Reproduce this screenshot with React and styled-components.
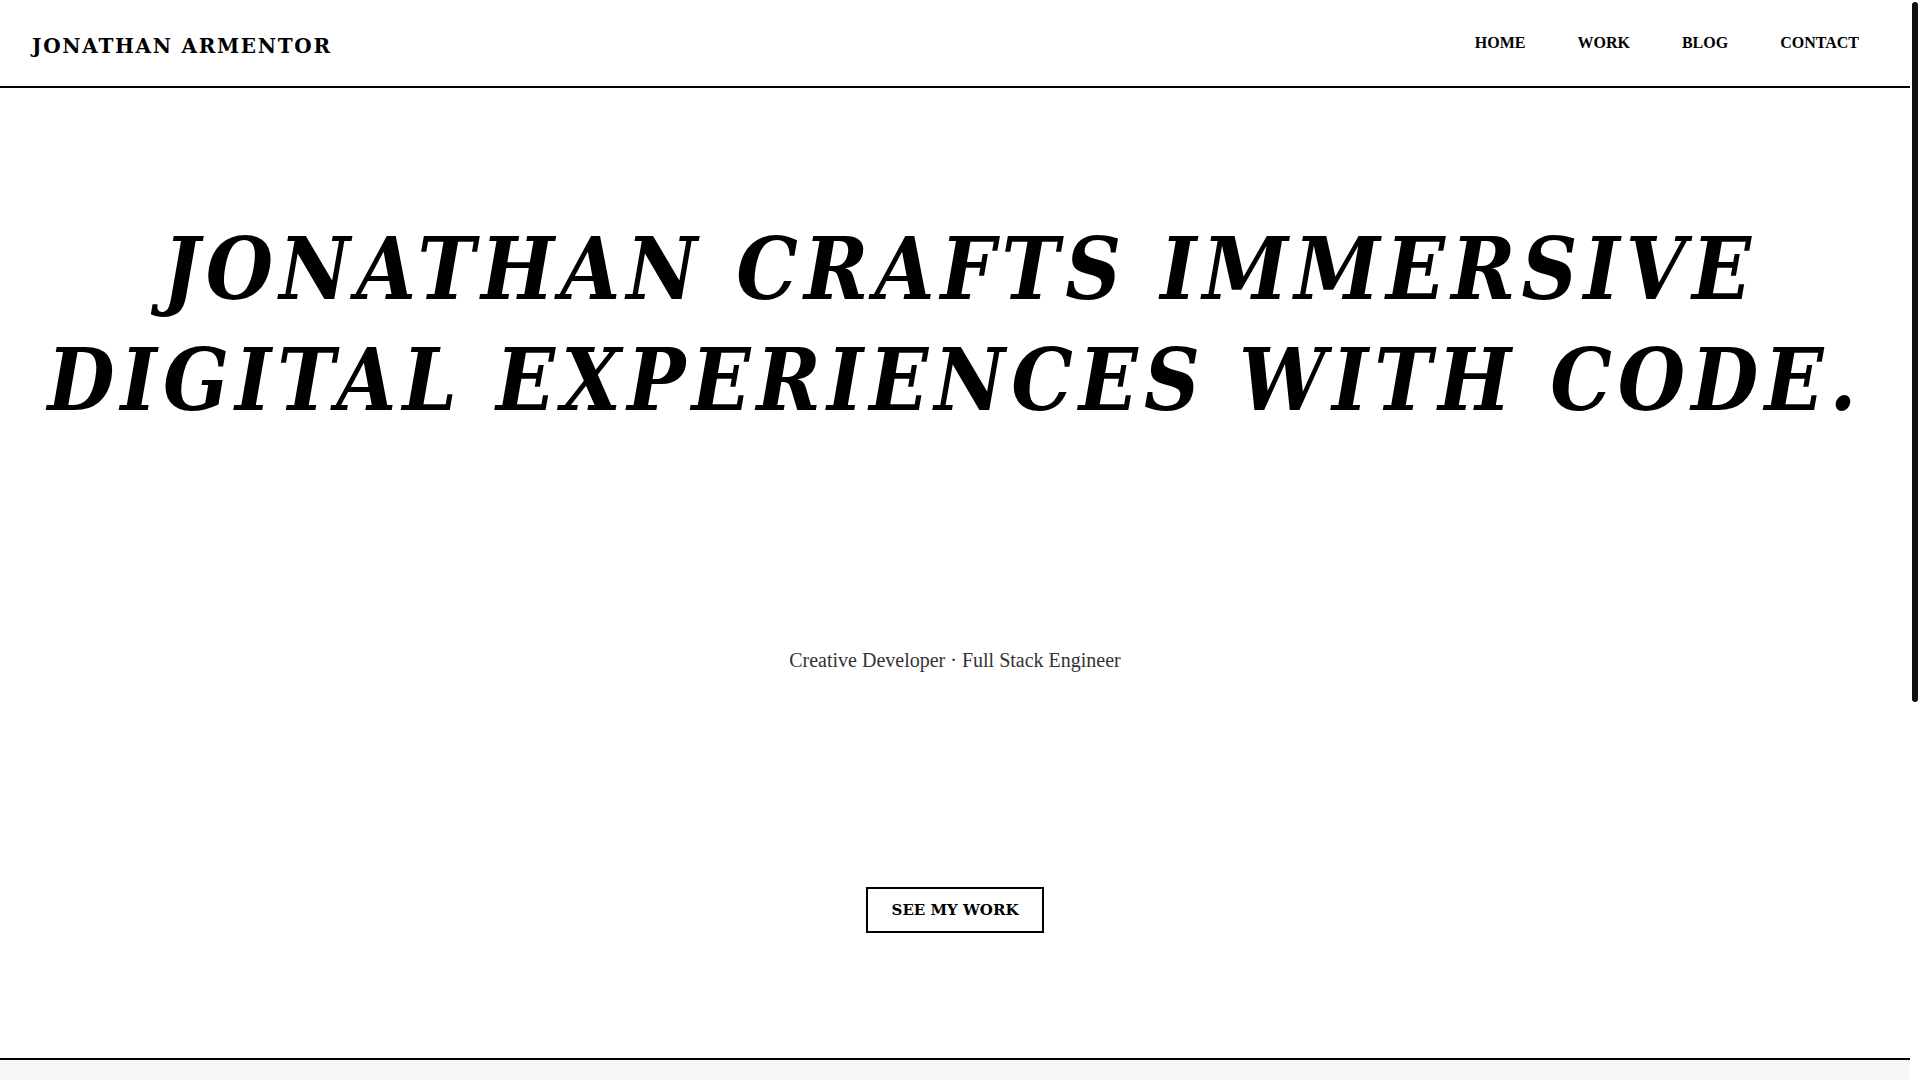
import React from "react";
import styled, { createGlobalStyle } from "styled-components";

const Global = createGlobalStyle`
  html, body { margin: 0; padding: 0; background: #fff; }
  body { font-family: "Liberation Serif", "Times New Roman", serif; color: #000; }
  * { box-sizing: border-box; }
  ::-webkit-scrollbar { width: 10px; }
  ::-webkit-scrollbar-track { background: #fff; }
  ::-webkit-scrollbar-thumb { background: #111; border: 2px solid #fff; border-radius: 5px; }
`;

const Page = styled.div`
  margin-right: 10px;
`;

const ScrollThumb = styled.div`
  position: fixed;
  top: 2px;
  right: 2px;
  width: 6px;
  height: 700px;
  border-radius: 3px;
  background: #111;
`;

const Header = styled.header`
  height: 88px;
  display: flex;
  align-items: center;
  justify-content: space-between;
  padding: 0 51px 0 32px;
  border-bottom: 2px solid #000;
`;

const Logo = styled.a`
  font-family: "DejaVu Serif", serif;
  font-weight: 700;
  font-size: 20px;
  letter-spacing: 1.7px;
  color: #000;
  text-decoration: none;
  margin-top: 6px;
`;

const Nav = styled.nav`
  display: flex;
  gap: 52px;
`;

const NavLink = styled.a`
  font-family: "Liberation Serif", serif;
  font-weight: 700;
  font-size: 16px;
  color: #000;
  text-decoration: none;
`;

const Hero = styled.section`
  height: 972px;
  display: flex;
  flex-direction: column;
  align-items: center;
  padding-top: 125px;
  border-bottom: 2px solid #000;
`;

const Title = styled.h1`
  margin: 0;
  font-family: "DejaVu Serif", serif;
  font-stretch: semi-condensed;
  font-style: italic;
  font-weight: 700;
  font-size: 86px;
  line-height: 111px;
  letter-spacing: 6.1px;
  text-align: center;
  white-space: nowrap;
  color: #000;
`;

const Line = styled.span`
  display: block;
  padding-left: ${(p) => p.$shift || 0}px;
`;

const Subtitle = styled.p`
  margin: 214px 0 0;
  font-family: "Liberation Serif", serif;
  font-size: 20px;
  color: #333;
`;

const Button = styled.a`
  display: inline-block;
  margin-top: 215px;
  padding: 12px 24px;
  border: 2px solid #000;
  font-family: "DejaVu Serif", serif;
  font-weight: 700;
  font-size: 15px;
  color: #000;
  text-decoration: none;
`;

const Work = styled.section`
  background: #f7f7f7;
  min-height: 606px;
`;

export default function App() {
  return (
    <>
      <Global />
      <Page>
        <Header>
          <Logo href="#">JONATHAN ARMENTOR</Logo>
          <Nav>
            <NavLink href="#">HOME</NavLink>
            <NavLink href="#">WORK</NavLink>
            <NavLink href="#">BLOG</NavLink>
            <NavLink href="#">CONTACT</NavLink>
          </Nav>
        </Header>
        <Hero>
          <Title>
            <Line $shift={10}>JONATHAN CRAFTS IMMERSIVE</Line>
            <Line>DIGITAL EXPERIENCES WITH CODE.</Line>
          </Title>
          <Subtitle>Creative Developer · Full Stack Engineer</Subtitle>
          <Button href="#">SEE MY WORK</Button>
        </Hero>
        <Work />
      </Page>
      <ScrollThumb aria-hidden="true" />
    </>
  );
}
